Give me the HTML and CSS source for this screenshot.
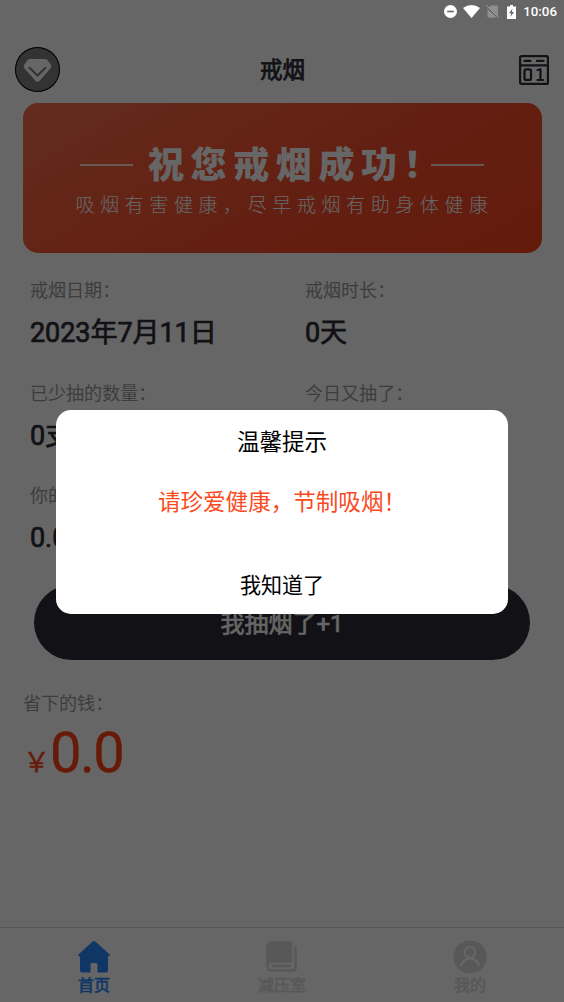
FILE: index.html
```html
<!DOCTYPE html>
<html lang="zh-CN">
<head>
<meta charset="utf-8">
<title>戒烟</title>
<link rel="stylesheet" href="styles.css">
</head>
<body>
<div class="screen">
  <div class="page">
    <header class="nav">
      <div class="vip">
        <svg width="45" height="45" viewBox="0 0 45 45">
          <path d="M14.5 12.5H30.500Q31.500 12.500 32.200 13.300L35.500 18Q36.400 19.600 35.300 21L24.300 33.500Q22.500 35.200 20.700 33.500L9.700 21Q8.600 19.600 9.500 18L12.800 13.300Q13.500 12.500 14.500 12.500Z" fill="#fff" stroke="#fff" stroke-linejoin="round"/>
          <path d="M14.500 20.800L22.500 28.500L30.500 20.800" fill="none" stroke="#808080" stroke-width="2" stroke-linecap="round"/>
        </svg>
      </div>
      <h1 class="nav-title">戒烟</h1>
      <svg class="calendar" width="32" height="32" viewBox="0 0 32 32" fill="none" stroke="#2e2d38" stroke-width="2.200" stroke-linecap="round">
        <rect x="2.100" y="2.100" width="27.800" height="27.800" rx="1.500"/>
        <path d="M2.500 11.300H29.500M6.500 6.900H12.500M19 6.900H25.500"/>
        <rect x="6.500" y="15.300" width="6.500" height="10.600" rx="1.500"/>
        <path d="M19.500 16L22.500 15.300V26M19.500 26H25.200"/>
      </svg>
    </header>

    <section class="banner">
      <div class="banner-head">
        <i class="rule"></i><strong class="banner-title">祝您戒烟成功！</strong><i class="rule"></i>
      </div>
      <p class="banner-sub">吸烟有害健康，尽早戒烟有助身体健康</p>
    </section>

    <section class="stats">
      <div class="stat"><span class="label">戒烟日期：</span><b class="value">2023年7月11日</b></div>
      <div class="stat"><span class="label">戒烟时长：</span><b class="value">0天</b></div>
      <div class="stat"><span class="label">已少抽的数量：</span><b class="value">0支</b></div>
      <div class="stat"><span class="label">今日又抽了：</span><b class="value"></b></div>
      <div class="stat"><span class="label">你的</span><b class="value">0.0</b></div>
    </section>

    <button class="smoke">我抽烟了+1</button>

    <section class="saved">
      <span class="label">省下的钱：</span>
      <div class="money"><span class="yen">￥</span><span class="amount">0.0</span></div>
    </section>

    <nav class="tabs">
      <div class="tab active">
        <svg width="34" height="34" viewBox="0 0 34 34"><path d="M15.600 1.600Q17 .4 18.400 1.600L32.600 14.600Q33.600 16.300 31.800 16.300H31V30.500Q31 32.500 29 32.500H20.500V25Q20.500 23 18.500 23H15.500Q13.500 23 13.500 25V32.500H5Q3 32.500 3 30.500V16.300H2.200Q.4 16.300 1.400 14.600Z" fill="#2888ff"/></svg>
        <span>首页</span>
      </div>
      <div class="tab">
        <svg width="34" height="34" viewBox="0 0 34 34"><path d="M7.500 1.500H25Q27 1.500 27 3.500V21H7Q1.500 21 1.500 26V7Q1.500 1.500 7.500 1.500Z" fill="#dbdbdb"/><path d="M2.500 26V7Q2.500 2.500 7.500 2.500H26V21.500H7.500Q2.500 21.500 2.500 26Q2.500 30.500 7 30.500H29Q30.500 30.500 30.500 29V7M7.500 26H25" fill="none" stroke="#dbdbdb" stroke-width="2.400" stroke-linecap="round"/></svg>
        <span>减压室</span>
      </div>
      <div class="tab">
        <svg width="34" height="34" viewBox="0 0 34 34"><circle cx="17" cy="17" r="16.600" fill="#dbdbdb"/><g fill="none" stroke="#fff" stroke-width="2.200" stroke-linecap="round"><circle cx="17" cy="12.300" r="5.300"/><path d="M8.200 25.500A9 9 0 0 1 25.800 25.500"/></g></svg>
        <span>我的</span>
      </div>
    </nav>
  </div>

  <div class="mask">
    <div class="status">
      <svg width="13" height="13" viewBox="0 0 13 13"><circle cx="6.500" cy="6.500" r="6.500" fill="#fff"/><path d="M3.200 6.500H9.800" stroke="#666" stroke-width="1.600"/></svg>
      <svg class="wifi" width="17" height="13" viewBox="0 0 17 13"><path d="M0 3Q8.500-3 17 3L8.500 13Z" fill="#fff"/></svg>
      <svg class="sim" width="13" height="13" viewBox="0 0 13 13"><path d="M4.500.5H11Q12 .5 12 1.500V12.500H2.500Q1.500 12.500 1.500 11.500V3.500Z" fill="#8f8f8f"/><path d="M0 1L12.500 13" stroke="#666" stroke-width="2"/><path d="M.5.500L12.500 12.500" stroke="#a0a0a0"/></svg>
      <svg class="battery" width="9" height="14" viewBox="0 0 9 14"><path d="M3 0H6V1.500H9V14H0V1.500H3Z" fill="#fff"/><path d="M5.500 3.500L2 8.200H4.200L3.500 12L7 7H4.900Z" fill="#666"/></svg>
      <span>10:06</span>
    </div>
    <div class="dialog">
      <h2 class="dialog-title">温馨提示</h2>
      <p class="dialog-text">请珍爱健康，节制吸烟！</p>
      <button class="dialog-ok">我知道了</button>
    </div>
  </div>
</div>
</body>
</html>
```
FILE: styles.css
```css
* { box-sizing: border-box; margin: 0; padding: 0; }
body { font-family: Roboto, "Noto Sans CJK SC", sans-serif; color: #2e2d38; background: #fff; }
button { border: 0; font: inherit; }
svg { display: block; flex: none; }

.screen { position: relative; width: 564px; height: 1002px; overflow: hidden; }
.page { display: flex; flex-direction: column; height: 100%; padding-top: 36px; }

.nav { display: grid; grid-template-columns: 1fr auto 1fr; align-items: center; height: 67px; padding: 0 14px 0 15px; }
.vip { width: 45px; height: 45px; border-radius: 50%; background: #808080; box-shadow: inset 0 0 0 1px #000; }
.nav-title { padding-top: 2px; font-size: 22.500px; line-height: 33px; font-weight: 400; -webkit-text-stroke: .8px; }
.calendar { justify-self: end; }

.banner { height: 150px; margin: 0 22.500px; padding-top: 37px; border-radius: 15px; background: linear-gradient(150deg, #f66f4d 0%, #f95a36 35%, #f74d2a 65%, #f9431c 100%); color: #fff; }
.banner-head { display: flex; align-items: center; justify-content: center; height: 52px; }
.rule { width: 53px; height: 2px; margin-bottom: 3px; background: #fff; opacity: .8; }
.banner-title { margin-left: 15px; width: 283px; white-space: nowrap; font-size: 36px; letter-spacing: 6.600px; line-height: 52px; font-weight: 900; }
.banner-sub { padding-left: 53px; font-size: 19px; letter-spacing: 5.600px; line-height: 28px; font-weight: 300; white-space: nowrap; }

.stats { display: grid; grid-template-columns: 275px 1fr; grid-auto-rows: 102.700px; padding: 24px 0 0 30px; height: 332px; }
.stat { display: flex; flex-direction: column; }
.label { display: block; font-size: 18.050px; line-height: 28px; color: #999; }
.value { margin-top: 8px; font-size: 27.070px; line-height: 40px; font-weight: 400; letter-spacing: -.1px; -webkit-text-stroke: .7px; }

.smoke { flex: none; height: 75px; margin: 0 34px; padding-bottom: 3px; border-radius: 38px; background: #2f2e38; color: #fff; font-size: 24px; font-weight: 400; -webkit-text-stroke: .6px; }

.saved { padding: 30px 23px 0; }
.money { display: flex; align-items: baseline; color: #ff4419; margin-top: 3px; -webkit-text-stroke: .4px; }
.yen { font-size: 27px; }
.amount { font-size: 56px; line-height: 64px; letter-spacing: -1.500px; }

.tabs { display: flex; height: 75px; margin-top: auto; border-top: 1px solid #d8d8d8; padding-top: 12px; }
.tab { flex: 1; display: flex; flex-direction: column; align-items: center; color: #dbdbdb; font-size: 16px; line-height: 23px; font-weight: 400; -webkit-text-stroke: .6px; }
.active { color: #2888ff; }

.mask { position: absolute; inset: 0; background: rgba(0, 0, 0, .6); color: #fff; }
.status { display: flex; align-items: center; justify-content: flex-end; height: 23px; padding-right: 7px; font-size: 13.300px; font-weight: 500; }
.wifi { margin-left: 6px; }
.sim { margin-left: 6px; }
.battery { margin: 0 7px 0 8px; }
.dialog { position: absolute; left: 56px; top: 410px; width: 452px; height: 204px; border-radius: 15px; background: #fff; color: #000; text-align: center; display: flex; flex-direction: column; }
.dialog-title { padding-top: 16px; font-size: 22.560px; line-height: 34px; font-weight: 400; }
.dialog-text { padding-top: 26px; font-size: 22.560px; line-height: 34px; color: #fa4a1e; }
.dialog-ok { margin-top: auto; height: 60px; background: transparent; font-size: 21.060px; }
```
